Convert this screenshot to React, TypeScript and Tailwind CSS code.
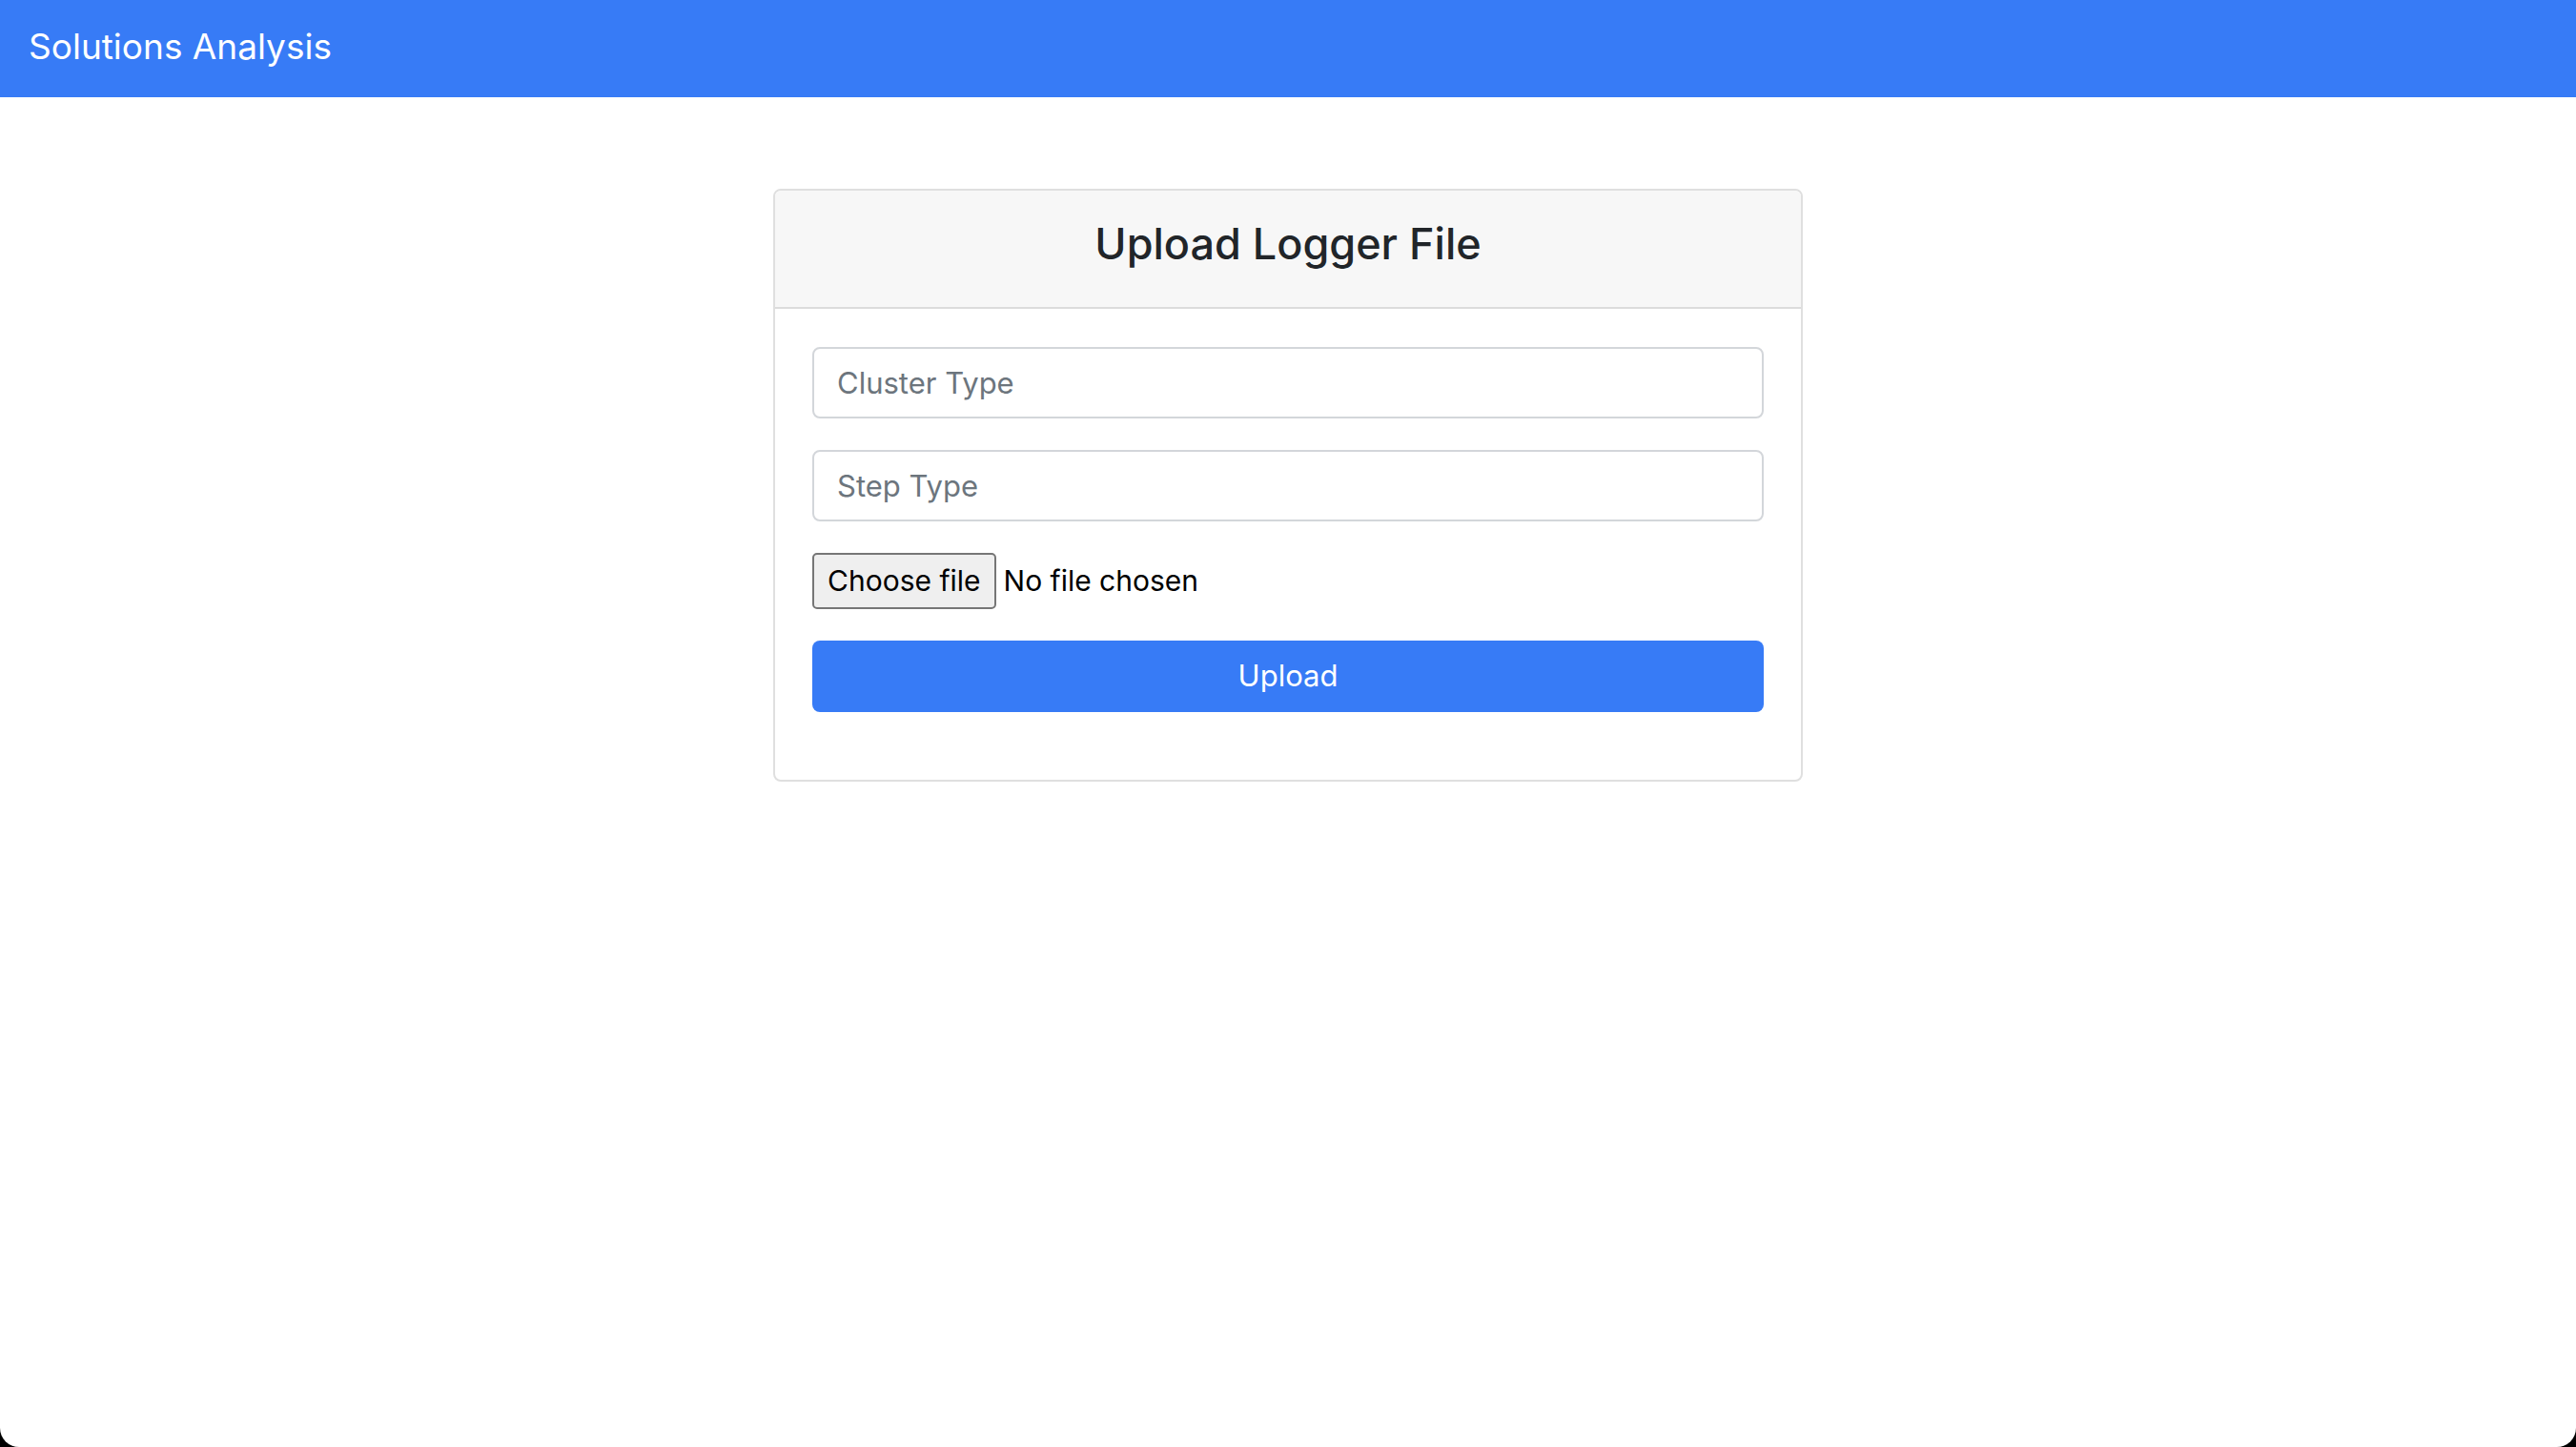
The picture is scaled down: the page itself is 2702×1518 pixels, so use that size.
export default function App() {
  return (
    <div className="h-screen bg-black font-['Inter',sans-serif]">
      <div className="h-full bg-white rounded-b-[20px] overflow-hidden">
        <nav className="h-[102px] bg-[#377bf6] flex items-center px-[30px] pb-[6px]">
          <span className="text-white text-[37px] leading-none">Solutions Analysis</span>
        </nav>
        <div className="flex justify-center pt-[96px]">
          <div className="w-[1080px] border-2 border-[#dfdfdf] rounded-[8px] overflow-hidden">
            <div className="h-[124px] bg-[#f7f7f7] border-b-2 border-[#dcdcdc] flex items-center justify-center pb-[12px]">
              <h1 className="text-[45px] font-medium text-[#212529] leading-none">Upload Logger File</h1>
            </div>
            <form className="px-[39px] pt-[40px] pb-[71px] flex flex-col gap-[33px]">
              <input
                type="text"
                placeholder="Cluster Type"
                className="h-[75px] w-full border-2 border-[#d3d6da] rounded-[8px] px-[24px] text-[31px] placeholder:text-[#6c757d] outline-none"
              />
              <input
                type="text"
                placeholder="Step Type"
                className="h-[75px] w-full border-2 border-[#d3d6da] rounded-[8px] px-[24px] text-[31px] placeholder:text-[#6c757d] outline-none"
              />
              <div className="flex items-center h-[59px] gap-[8px]">
                <button
                  type="button"
                  className="h-[59px] px-[14px] whitespace-nowrap bg-[#efefef] border-2 border-[#767676] rounded-[5px] text-[30px] text-black"
                >
                  Choose file
                </button>
                <span className="text-[30px] text-black whitespace-nowrap">No file chosen</span>
              </div>
              <button
                type="button"
                className="h-[75px] w-full bg-[#377bf6] rounded-[8px] text-white text-[31px]"
              >
                Upload
              </button>
            </form>
          </div>
        </div>
      </div>
    </div>
  );
}
